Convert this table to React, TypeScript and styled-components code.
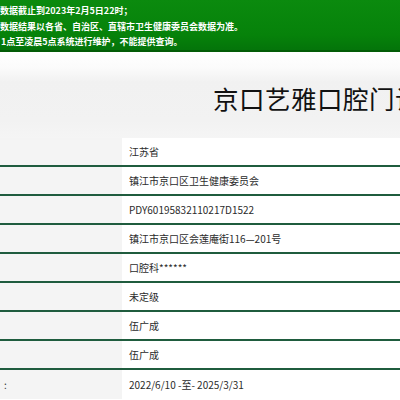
import React from "react";
import styled, { createGlobalStyle } from "styled-components";

const Global = createGlobalStyle`
  html, body { margin: 0; padding: 0; background: #ffffff; }
  body { width: 400px; height: 400px; overflow: hidden; font-family: "Noto Sans CJK SC", "Noto Sans", sans-serif; }
`;

const Page = styled.div`
  width: 400px;
  display: flex;
  flex-direction: column;
`;

const Notice = styled.div`
  height: 52px;
  box-sizing: border-box;
  padding-top: 3px;
  background: linear-gradient(180deg, #0b8a0e 0%, #06820a 70%, #04740a 100%);
  border-bottom: 2px solid #035c07;
  color: #ffffff;
  font-size: 9px;
  font-weight: 700;
  line-height: 15.5px;
  white-space: nowrap;
  overflow: hidden;
`;

const NoticeLine = styled.div<{ indent?: number }>`
  padding-left: ${(p) => p.indent ?? 0}px;
`;

const TitleBand = styled.div`
  height: 86px;
  display: flex;
  align-items: center;
  padding-left: 213px;
  padding-top: 4px;
  box-sizing: border-box;
  background: linear-gradient(180deg, #ffffff 0%, #fbfbfb 18%, #f1f1f1 35%, #f2f2f2 80%, #f5f5f5 100%);
  overflow: hidden;
  white-space: nowrap;
`;

const Title = styled.h1`
  margin: 0;
  font-size: 25.5px;
  font-weight: 400;
  color: #111111;
  letter-spacing: 0.5px;
`;

const Table = styled.div`
  display: flex;
  flex-direction: column;
`;

const Row = styled.div<{ last?: boolean }>`
  display: grid;
  grid-template-columns: 122px 1fr;
  height: 29px;
  box-sizing: border-box;
  border-bottom: ${(p) => (p.last ? "none" : "2px solid #1f5c3e")};
`;

const Label = styled.div`
  background: #f4f4f4;
  display: flex;
  align-items: center;
  overflow: hidden;
  font-size: 10px;
  color: #333333;
  white-space: nowrap;
`;

const LabelText = styled.span`
  padding-left: 4px;
`;

const Value = styled.div`
  background: #ffffff;
  display: flex;
  align-items: center;
  padding-left: 7px;
  font-size: 10px;
  color: #2b2b2b;
  white-space: nowrap;
  overflow: hidden;
`;

const rows: { label?: string; value: string }[] = [
  { value: "江苏省" },
  { value: "镇江市京口区卫生健康委员会" },
  { value: "PDY60195832110217D1522" },
  { value: "镇江市京口区会莲庵街116—201号" },
  { value: "口腔科******" },
  { value: "未定级" },
  { value: "伍广成" },
  { value: "伍广成" },
  { label: ":", value: "2022/6/10 -至- 2025/3/31" },
];

export default function App() {
  return (
    <Page>
      <Global />
      <Notice>
        <NoticeLine>数据截止到2023年2月5日22时；</NoticeLine>
        <NoticeLine>数据结果以各省、自治区、直辖市卫生健康委员会数据为准。</NoticeLine>
        <NoticeLine indent={1}>1点至凌晨5点系统进行维护，不能提供查询。</NoticeLine>
      </Notice>
      <TitleBand>
        <Title>京口艺雅口腔门诊</Title>
      </TitleBand>
      <Table>
        {rows.map((r, i) => (
          <Row key={i} last={i === rows.length - 1}>
            <Label>{r.label ? <LabelText>{r.label}</LabelText> : null}</Label>
            <Value>{r.value}</Value>
          </Row>
        ))}
      </Table>
    </Page>
  );
}
